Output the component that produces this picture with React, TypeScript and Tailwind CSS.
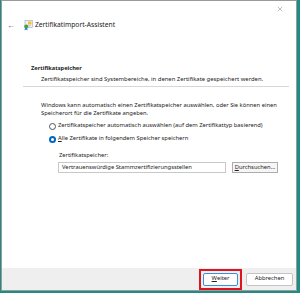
import { X } from "lucide-react";

function CertIcon() {
  return (
    <svg width="10" height="11" viewBox="0 0 10 11">
      <rect x="2" y="0.5" width="7.5" height="7" fill="#f3f3f3" stroke="#9aa8b8" strokeWidth="0.6" />
      <rect x="5" y="1.5" width="3.5" height="3" fill="#f1c232" />
      <rect x="3" y="5.5" width="5" height="0.6" fill="#9aa8b8" />
      <circle cx="3.2" cy="6.5" r="2" fill="#45a33e" />
      <path d="M2 8 L1.5 10.5 L3.2 9.6 L4.6 10.5 L4.2 8 Z" fill="#2f7fcf" />
    </svg>
  );
}

export default function App() {
  return (
    <div
      className="w-[300px] h-[293px] bg-[#1f8c86] overflow-hidden pl-[1px]"
      style={{ fontFamily: '"Noto Sans", "Open Sans", sans-serif' }}
    >
      <div className="w-[296px] h-[291px] bg-white border border-[#9a9a9a] flex flex-col text-[#222] whitespace-nowrap">
        {/* title bar */}
        <div className="h-[15px] flex justify-end items-center pr-[12px] pt-[1px]">
          <X className="w-[8px] h-[8px] text-[#666]" strokeWidth={1.3} />
        </div>
        {/* wizard header */}
        <div className="flex items-center h-[18px] pl-[5px]">
          <span className="text-[8px] text-[#555] w-[16px] leading-none">←</span>
          <CertIcon />
          <span className="ml-[2px] text-[6.7px] leading-none">Zertifikatimport-Assistent</span>
        </div>

        {/* page header */}
        <div className="mt-[32px] pl-[29px] text-[5.7px] font-bold leading-none">Zertifikatspeicher</div>
        <div className="mt-[5px] pl-[39px] text-[5.9px] leading-none">
          Zertifikatspeicher sind Systembereiche, in denen Zertifikate gespeichert werden.
        </div>
        <div className="mt-[3px] ml-[21px] w-[266px] h-px bg-[#d6d6d6]" />

        {/* body */}
        <div className="mt-[14px] pl-[39px] text-[5.8px] leading-[8px]">
          Windows kann automatisch einen Zertifikatspeicher auswählen, oder Sie können einen
          <br />
          Speicherort für die Zertifikate angeben.
        </div>

        <div className="mt-[6px] pl-[47px] flex flex-col gap-[6px] text-[5.8px] leading-none">
          <div className="flex items-center gap-[2px]">
            <span className="w-[7px] h-[7px] shrink-0 rounded-full border border-[#555] bg-white" />
            <span>Zertifikatspeicher automatisch auswählen (auf dem Zertifikattyp basierend)</span>
          </div>
          <div className="flex items-center gap-[2px]">
            <span className="w-[7px] h-[7px] shrink-0 rounded-full bg-[#0067c0] flex items-center justify-center">
              <span className="w-[3px] h-[3px] rounded-full bg-white" />
            </span>
            <span>
              <span className="underline">A</span>lle Zertifikate in folgendem Speicher speichern
            </span>
          </div>
        </div>

        <div className="mt-[10px] pl-[57px] text-[5.8px] leading-none">Zertifikatspeicher:</div>
        <div className="mt-[4px] pl-[56px] flex items-center gap-[6px]">
          <div className="w-[168px] h-[11px] border border-[#c8c8c8] flex items-center pl-[3px] text-[5.8px] leading-none">
            Vertrauenswürdige Stammzertifizierungsstellen
          </div>
          <div className="w-[46px] h-[11px] border border-[#adadad] bg-[#f6f6f6] flex items-center justify-center text-[5.8px] leading-none">
            <span>
              <span className="underline">D</span>urchsuchen...
            </span>
          </div>
        </div>

        <div className="flex-1" />

        {/* footer */}
        <div className="h-[22px] bg-[#efefef] flex items-center justify-end pr-[3px] gap-[4px]">
          <div className="border-2 border-[#e0141e] px-[2px] py-[2px]">
            <div className="w-[35px] h-[13px] rounded-[2px] border border-[#3c8fd9] bg-white flex items-center justify-center text-[5.8px] leading-none">
              <span>
                <span className="underline">W</span>eiter
              </span>
            </div>
          </div>
          <div className="w-[47px] h-[13px] rounded-[2px] border border-[#c4c4c4] bg-white flex items-center justify-center text-[5.8px] leading-none">
            Abbrechen
          </div>
        </div>
      </div>
    </div>
  );
}
